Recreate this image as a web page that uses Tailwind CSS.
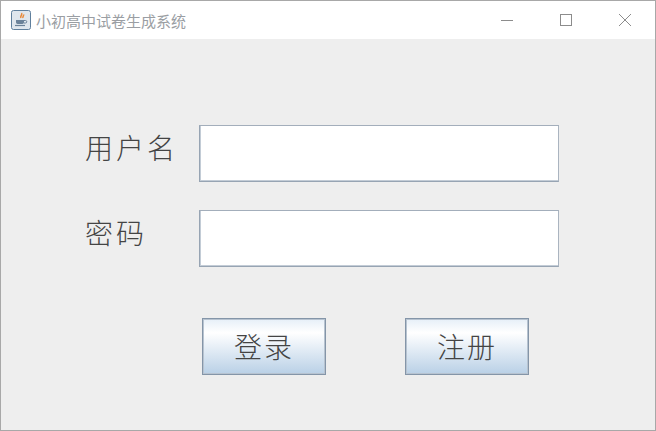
<!DOCTYPE html>
<html lang="zh-CN">
	<head>
		<meta charset="UTF-8" />
		<meta name="viewport" content="width=device-width, initial-scale=1.0" />
		<title>小初高中试卷生成系统</title>
		<script src="https://cdn.jsdelivr.net/npm/@tailwindcss/browser@4"></script>
	</head>
	<body class="bg-[#eeeeee]">
		<div class="w-[656px] h-[431px] flex flex-col overflow-hidden bg-[#eeeeee] border border-[#a8a8a8] font-['Noto_Sans_CJK_SC',sans-serif] font-light">
			<!-- title bar -->
			<div class="h-[38px] shrink-0 bg-white flex items-center pl-[10px]">
				<svg width="20" height="20" viewBox="0 0 20 20" class="shrink-0">
					<rect x="0.500" y="0.500" width="19" height="19" rx="2" fill="#dfe6ed" stroke="#5f7f9c" />
					<path d="M10.500 3c1.500 1.600-1.800 2.800-.6 5M12.500 4.500c.8 1.300-1.300 2-.5 3.500" fill="none" stroke="#e8893a" stroke-width="1.500" />
					<path d="M5 10h8v2.500a2 2 0 0 1-2 1.500H7a2 2 0 0 1-2-1.500z" fill="#6b8299" />
					<path d="M13 10.500h1.500a1 1 0 0 1 0 2.500H13" fill="none" stroke="#6b8299" />
					<path d="M4 15.500h10" stroke="#6b8299" stroke-width="1.200" />
				</svg>
				<span class="ml-[5px] text-[15px] leading-none font-normal text-[#9a9ea3]">小初高中试卷生成系统</span>
				<div class="ml-auto flex items-center">
					<div class="w-[59px] flex justify-center">
						<svg width="12" height="12" viewBox="0 0 12 12"><path d="M0 6.500h12" stroke="#8c8c8c" /></svg>
					</div>
					<div class="w-[59px] flex justify-center">
						<svg width="12" height="12" viewBox="0 0 12 12"><rect x="0.500" y="0.500" width="11" height="11" fill="none" stroke="#8c8c8c" /></svg>
					</div>
					<div class="w-[59px] flex justify-center mr-[1px]">
						<svg width="12" height="12" viewBox="0 0 12 12"><path d="M0 0l12 12M12 0L0 12" stroke="#8c8c8c" /></svg>
					</div>
				</div>
			</div>

			<!-- form -->
			<div class="flex-1 flex flex-col pt-[86px] pl-[84px]">
				<div class="flex items-center h-[57px]">
					<span class="w-[114px] pb-[14px] text-[28px] leading-none tracking-[3px] text-[#444]">用户名</span>
					<div class="w-[360px] h-[57px] bg-white border border-[#97a4b3] border-r-[#aab4c0] border-t-[#a3aebb] shadow-[inset_1px_-1px_0_#c3ccd6]"></div>
				</div>
				<div class="flex items-center h-[57px] mt-[28px]">
					<span class="w-[114px] pb-[14px] text-[28px] leading-none tracking-[3px] text-[#444]">密码</span>
					<div class="w-[360px] h-[57px] bg-white border border-[#97a4b3] border-r-[#aab4c0] border-t-[#a3aebb] shadow-[inset_1px_-1px_0_#c3ccd6]"></div>
				</div>
				<div class="flex mt-[51px] pl-[117px] gap-[79px]">
					<button class="w-[124px] h-[57px] pb-[2px] border border-[#8495a8] shadow-[inset_0_0_0_1px_#b7c3d0] bg-linear-to-b from-[#e6eff8] via-white via-[25%] to-[#b9d0e6] text-[28px] leading-none tracking-[2px] text-[#444]">登录</button>
					<button class="w-[124px] h-[57px] pb-[2px] border border-[#8495a8] shadow-[inset_0_0_0_1px_#b7c3d0] bg-linear-to-b from-[#e6eff8] via-white via-[25%] to-[#b9d0e6] text-[28px] leading-none tracking-[2px] text-[#444]">注册</button>
				</div>
			</div>
		</div>
	</body>
</html>
